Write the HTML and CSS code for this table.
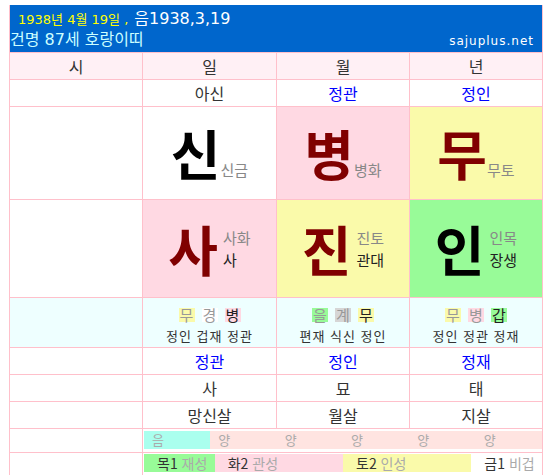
FILE: index.html
```html
<!DOCTYPE html>
<html lang="ko">
<head>
<meta charset="utf-8">
<title>사주</title>
<link rel="stylesheet" href="styles.css">
</head>
<body>
<div class="saju">
  <div class="banner">
    <div class="bline"><span class="solar">1938년 4월 19일 ,</span> <span class="lunar">음1938,3,19</span></div>
    <div class="bline split"><span class="gm">건명 87세 호랑이띠</span><span class="site">sajuplus.net</span></div>
  </div>

  <div class="cell head">시</div>
  <div class="cell head">일</div>
  <div class="cell head">월</div>
  <div class="cell head">년</div>

  <div class="cell"></div>
  <div class="cell">아신</div>
  <div class="cell blue">정관</div>
  <div class="cell blue">정인</div>

  <div class="cell"></div>
  <div class="cell big top"><div class="pair"><span class="ch black">신</span><span class="sub">신금</span></div></div>
  <div class="cell big top bg-pink"><div class="pair"><span class="ch red">병</span><span class="sub">병화</span></div></div>
  <div class="cell big top bg-yellow"><div class="pair"><span class="ch red">무</span><span class="sub">무토</span></div></div>

  <div class="cell"></div>
  <div class="cell big bot bg-pink"><div class="pair"><span class="ch red">사</span><span class="subs"><span class="sub">사화</span><span class="sub dark">사</span></span></div></div>
  <div class="cell big bot bg-yellow"><div class="pair"><span class="ch red">진</span><span class="subs"><span class="sub">진토</span><span class="sub dark">관대</span></span></div></div>
  <div class="cell big bot bg-green"><div class="pair"><span class="ch black">인</span><span class="subs"><span class="sub">인목</span><span class="sub dark">장생</span></span></div></div>

  <div class="cell hidden"></div>
  <div class="cell hidden">
    <div class="pills"><span class="pill bg-yellow">무</span><span class="pill bg-white">경</span><span class="pill bg-pink main">병</span></div>
    <div class="gods">정인 겁재 정관</div>
  </div>
  <div class="cell hidden">
    <div class="pills"><span class="pill bg-green">을</span><span class="pill bg-gray">계</span><span class="pill bg-yellow main">무</span></div>
    <div class="gods">편재 식신 정인</div>
  </div>
  <div class="cell hidden">
    <div class="pills"><span class="pill bg-yellow">무</span><span class="pill bg-pink">병</span><span class="pill bg-green main">갑</span></div>
    <div class="gods">정인 정관 정재</div>
  </div>

  <div class="cell"></div>
  <div class="cell blue">정관</div>
  <div class="cell blue">정인</div>
  <div class="cell blue">정재</div>

  <div class="cell"></div>
  <div class="cell">사</div>
  <div class="cell">묘</div>
  <div class="cell">태</div>

  <div class="cell"></div>
  <div class="cell">망신살</div>
  <div class="cell">월살</div>
  <div class="cell">지살</div>

  <div class="cell"></div>
  <div class="cell wide yy">
    <div class="bar">
      <span class="seg bg-aqua">음</span>
      <span class="seg bg-rose">양</span>
      <span class="seg bg-rose">양</span>
      <span class="seg bg-rose">양</span>
      <span class="seg bg-rose">양</span>
      <span class="seg bg-rose">양</span>
    </div>
  </div>

  <div class="cell"></div>
  <div class="cell wide el">
    <div class="bar">
      <span class="seg bg-green" style="flex:1"><b>목1</b> 재성</span>
      <span class="seg bg-pink" style="flex:2"><b>화2</b> 관성</span>
      <span class="seg bg-yellow" style="flex:2"><b>토2</b> 인성</span>
      <span class="seg bg-white" style="flex:1"><b>금1</b> 비겁</span>
    </div>
  </div>
</div>
</body>
</html>
```
FILE: styles.css
```css
html, body {
  margin: 0;
  padding: 0;
  background: #fff;
}
body {
  padding: 5px 0 0 9px;
  font-family: "Noto Sans CJK KR", "Noto Sans", sans-serif;
  color: #333;
}
.saju {
  width: 532px;
  display: grid;
  grid-template-columns: 132px 133px 132px 132px;
  grid-template-rows: 47px 26px 26px 92px 97px 49px 26px 26px 26px 23px 24px;
  gap: 1px;
  padding: 0 1px 1px;
  background: #ffc0cb;
}
.banner {
  grid-column: 1 / 5;
  background: #0066cc;
  padding-top: 3px;
  font-family: "DejaVu Sans", "Noto Sans CJK KR", sans-serif;
}
.bline {
  height: 21px;
  line-height: 21px;
  white-space: nowrap;
  display: flex;
  align-items: baseline;
}
.split {
  justify-content: space-between;
}
.solar {
  color: #ffff00;
  font-size: 13px;
  padding-left: 8px;
  margin-right: 6px;
}
.lunar {
  color: #fff;
  font-size: 16px;
}
.gm {
  color: #ccffff;
  font-size: 16px;
}
.site {
  color: #fff;
  font-size: 12px;
  letter-spacing: 1px;
  padding-right: 8px;
}
.cell {
  background: #fff;
  display: flex;
  align-items: center;
  justify-content: center;
  font-size: 16px;
  line-height: 18px;
  color: #333;
}
.head { background: #fff0f5; }
.blue { color: #0000ff; }

.pair {
  display: flex;
}
.top .pair { align-items: baseline; }
.bot .pair { align-items: center; }
.ch {
  font-size: 54px;
  line-height: 60px;
  font-weight: 700;
}
.black { color: #000; }
.red { color: #800000; }
.sub {
  font-size: 15px;
  line-height: 22px;
  color: #888;
}
.sub.dark { color: #222; }
.subs {
  display: flex;
  flex-direction: column;
  margin-left: 5px;
}

.bg-pink { background: #ffd9e3; }
.bg-yellow { background: #fafaaa; }
.bg-green { background: #98fb98; }
.bg-white { background: #fff; }
.bg-gray { background: #d6d6d6; }
.bg-aqua { background: #aaffee; }
.bg-rose { background: #ffe4e1; }

.hidden {
  background: #eeffff;
  flex-direction: column;
  justify-content: flex-start;
  padding-top: 10px;
}
.pills {
  display: flex;
  gap: 7px;
}
.pill {
  width: 16px;
  height: 14px;
  line-height: 14px;
  font-size: 15px;
  color: #999;
  text-align: center;
}
.pill.main { color: #222; }
.gods {
  margin-top: 6px;
  font-size: 13px;
  line-height: 16px;
  letter-spacing: 1px;
  color: #333;
}

.wide {
  grid-column: 2 / 5;
  display: block;
}
.bar {
  display: flex;
  height: 18px;
  margin-left: 1px;
}
.yy { padding-top: 2px; }
.el { padding-top: 1px; }
.yy .seg {
  flex: 1;
  padding-left: 8px;
  font-size: 13px;
  line-height: 18px;
  color: #aaa;
}
.el .seg {
  padding-left: 13px;
  font-size: 14px;
  line-height: 18px;
  color: #aaa;
  white-space: nowrap;
}
.el .seg b {
  font-weight: 400;
  color: #333;
}
```
